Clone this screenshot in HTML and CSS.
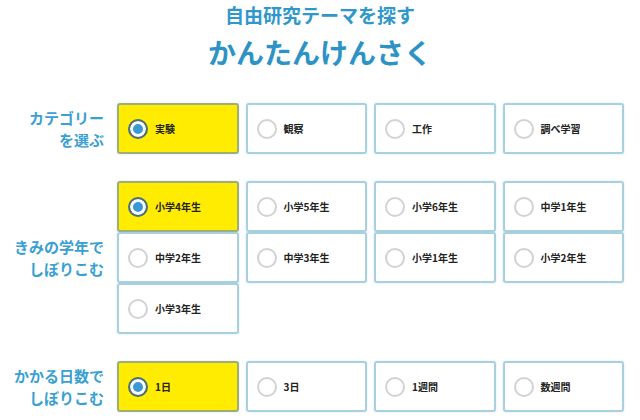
FILE: index.html
```html
<!doctype html>
<html>
<head>
<meta charset="utf-8">
<title>自由研究テーマを探す</title>
<link rel="stylesheet" href="styles.css">
</head>
<body>
<div class="head">
	<h1>自由研究テーマを探す</h1>
	<h2>かんたんけんさく</h2>
</div>
<form class="search">
	<div class="row">
		<p class="ttl">カテゴリー<br>を選ぶ</p>
		<div class="opts">
			<label class="opt on"><input type="radio" name="cat" checked><span>実験</span></label>
			<label class="opt"><input type="radio" name="cat"><span>観察</span></label>
			<label class="opt"><input type="radio" name="cat"><span>工作</span></label>
			<label class="opt"><input type="radio" name="cat"><span>調べ学習</span></label>
		</div>
	</div>
	<div class="row">
		<p class="ttl">きみの学年で<br>しぼりこむ</p>
		<div class="opts tight">
			<label class="opt on"><input type="radio" name="grade" checked><span>小学4年生</span></label>
			<label class="opt"><input type="radio" name="grade"><span>小学5年生</span></label>
			<label class="opt"><input type="radio" name="grade"><span>小学6年生</span></label>
			<label class="opt"><input type="radio" name="grade"><span>中学1年生</span></label>
			<label class="opt"><input type="radio" name="grade"><span>中学2年生</span></label>
			<label class="opt"><input type="radio" name="grade"><span>中学3年生</span></label>
			<label class="opt"><input type="radio" name="grade"><span>小学1年生</span></label>
			<label class="opt"><input type="radio" name="grade"><span>小学2年生</span></label>
			<label class="opt"><input type="radio" name="grade"><span>小学3年生</span></label>
		</div>
	</div>
	<div class="row">
		<p class="ttl">かかる日数で<br>しぼりこむ</p>
		<div class="opts">
			<label class="opt on"><input type="radio" name="days" checked><span>1日</span></label>
			<label class="opt"><input type="radio" name="days"><span>3日</span></label>
			<label class="opt"><input type="radio" name="days"><span>1週間</span></label>
			<label class="opt"><input type="radio" name="days"><span>数週間</span></label>
		</div>
	</div>
</form>
</body>
</html>
```

FILE: styles.css
```css
*{margin:0; padding:0; box-sizing:border-box;}
body{background:#fff; font-family:"Noto Sans CJK JP","Noto Sans",sans-serif; color:#222;}
.head{text-align:center; padding-top:4px; color:#2f97cb;}
.head h1{font-size:19px; line-height:22px; font-weight:bold;}
.head h2{font-size:28px; line-height:36px; font-weight:bold; margin-top:8px; color:#2d93c6;}
.search{padding:33px 16px 0 0;}
.row{display:flex; align-items:center; margin-bottom:27px;}
.ttl{width:104px; margin-right:13px; text-align:right; font-size:15px; line-height:22px; font-weight:bold; color:#3a9fd2; flex-shrink:0;}
.opts{flex:1; display:grid; grid-template-columns:repeat(4,1fr); gap:0 7px;}
.opt{display:flex; align-items:center; height:51px; padding-left:9px; border:2px solid #a9d0de; border-radius:3px; background:#fff; box-shadow:0 0 2px rgba(150,210,230,0.5); font-size:10px; font-weight:bold; cursor:pointer;}
.opts.tight .opt{height:51px;}
.opt.on{background:#ffec00; border-color:#9fae78;}
.opt input{appearance:none; -webkit-appearance:none; width:20px; height:20px; margin-right:7px; border:2px solid #d2d2d2; border-radius:50%; background:#fff; flex-shrink:0;}
.opt input:checked{border:2px solid #4f7070; background:#3c98d4; box-shadow:inset 0 0 0 3px #fff;}
```
